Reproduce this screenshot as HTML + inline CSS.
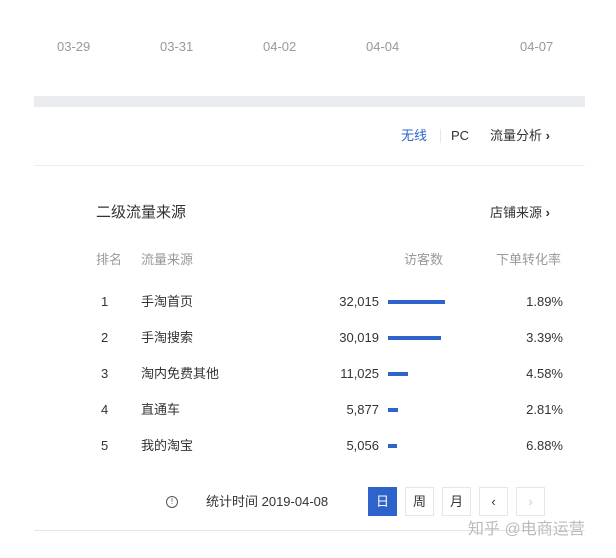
<!DOCTYPE html>
<html><head><meta charset="utf-8"><style>
body{margin:0;width:616px;height:558px;background:#fff;font-family:"Liberation Sans","Noto Sans CJK SC",sans-serif;position:relative;overflow:hidden;color:#333}
.a{position:absolute;white-space:nowrap;line-height:16px}
.ax{font-size:13px;color:#999;top:39px}
.hd{font-size:13px;color:#999;top:252px}
.r{font-size:13px;color:#333}
.bar{position:absolute;left:388px;height:4px;background:#2f63cc}
.btn{position:absolute;top:487px;width:29px;height:29px;border:1px solid #e6e6e6;box-sizing:border-box;font-size:13px;text-align:center;line-height:27px;color:#333}
</style></head><body>
<div class="a ax" style="left:57px">03-29</div>
<div class="a ax" style="left:160px">03-31</div>
<div class="a ax" style="left:263px">04-02</div>
<div class="a ax" style="left:366px">04-04</div>
<div class="a ax" style="left:520px">04-07</div>
<div class="a" style="left:34px;top:96px;width:551px;height:11px;background:#e9ebee"></div>
<div class="a" style="left:401px;top:128px;font-size:13px;color:#2f63cc">无线</div>
<div class="a" style="left:440px;top:129px;width:1px;height:14px;background:#e6e6e6"></div>
<div class="a" style="left:451px;top:128px;font-size:13px;color:#333">PC</div>
<div class="a" style="left:490px;top:128px;font-size:13px;color:#333">流量分析 <b>›</b></div>
<div class="a" style="left:34px;top:165px;width:551px;height:1px;background:#eee"></div>
<div class="a" style="left:96px;top:205px;font-size:15px;color:#333">二级流量来源</div>
<div class="a" style="left:490px;top:205px;font-size:13px;color:#333">店铺来源 <b>›</b></div>
<div class="a hd" style="left:96px">排名</div>
<div class="a hd" style="left:141px">流量来源</div>
<div class="a hd" style="left:404px">访客数</div>
<div class="a hd" style="left:496px">下单转化率</div>

<div class="a r" style="left:101px;top:294px">1</div><div class="a r" style="left:141px;top:294px">手淘首页</div><div class="a r" style="right:237px;top:294px">32,015</div><div class="bar" style="top:300px;width:57px"></div><div class="a r" style="right:53px;top:294px">1.89%</div>
<div class="a r" style="left:101px;top:330px">2</div><div class="a r" style="left:141px;top:330px">手淘搜索</div><div class="a r" style="right:237px;top:330px">30,019</div><div class="bar" style="top:336px;width:53px"></div><div class="a r" style="right:53px;top:330px">3.39%</div>
<div class="a r" style="left:101px;top:366px">3</div><div class="a r" style="left:141px;top:366px">淘内免费其他</div><div class="a r" style="right:237px;top:366px">11,025</div><div class="bar" style="top:372px;width:20px"></div><div class="a r" style="right:53px;top:366px">4.58%</div>
<div class="a r" style="left:101px;top:402px">4</div><div class="a r" style="left:141px;top:402px">直通车</div><div class="a r" style="right:237px;top:402px">5,877</div><div class="bar" style="top:408px;width:10px"></div><div class="a r" style="right:53px;top:402px">2.81%</div>
<div class="a r" style="left:101px;top:438px">5</div><div class="a r" style="left:141px;top:438px">我的淘宝</div><div class="a r" style="right:237px;top:438px">5,056</div><div class="bar" style="top:444px;width:9px"></div><div class="a r" style="right:53px;top:438px">6.88%</div>

<div class="a" style="left:166px;top:496px;width:10px;height:10px;border:1px solid #555;border-radius:50%;font-size:8px;line-height:10px;text-align:center;color:#555">!</div>
<div class="a r" style="left:206px;top:494px">统计时间 2019-04-08</div>
<div class="btn" style="left:368px;background:#2f63cc;border-color:#2f63cc;color:#fff">日</div>
<div class="btn" style="left:405px">周</div>
<div class="btn" style="left:442px">月</div>
<div class="btn" style="left:479px">‹</div>
<div class="btn" style="left:516px;color:#ccc">›</div>
<div class="a" style="left:34px;top:530px;width:551px;height:1px;background:#e6e6e6"></div>
<div class="a" style="left:468px;top:520px;font-size:16px;line-height:20px;color:#bbb">知乎 @电商运营</div>
</body></html>
